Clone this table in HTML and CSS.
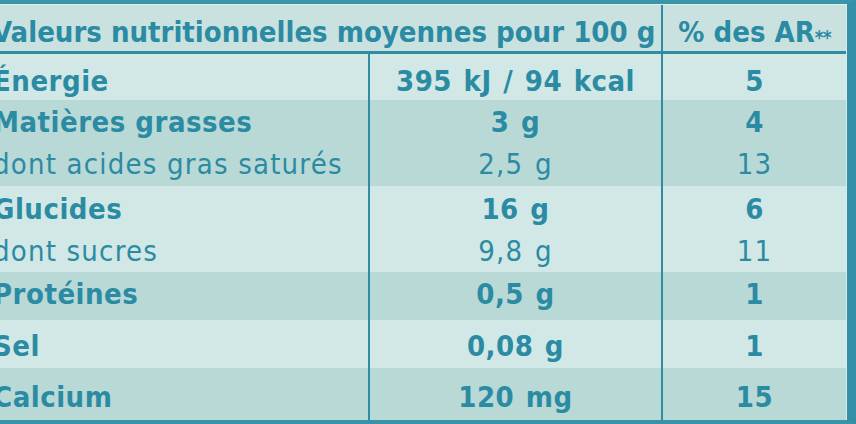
FILE: index.html
```html
<!DOCTYPE html>
<html lang="fr">
<head>
<meta charset="utf-8">
<title>Valeurs nutritionnelles</title>
<link rel="stylesheet" href="styles.css">
</head>
<body>
<div class="label">
  <div class="table">
    <div class="row head">
      <div class="c12">Valeurs nutritionnelles moyennes pour 100 g</div>
      <div class="c3">% des AR<span class="ast">**</span></div>
    </div>
    <div class="row light b">
      <div class="c1">Énergie</div><div class="c2">395 kJ / 94 kcal</div><div class="c3">5</div>
    </div>
    <div class="row dark b">
      <div class="c1">Matières grasses</div><div class="c2">3 g</div><div class="c3">4</div>
    </div>
    <div class="row dark">
      <div class="c1">dont acides gras saturés</div><div class="c2">2,5 g</div><div class="c3">13</div>
    </div>
    <div class="row light b">
      <div class="c1">Glucides</div><div class="c2">16 g</div><div class="c3">6</div>
    </div>
    <div class="row light">
      <div class="c1">dont sucres</div><div class="c2">9,8 g</div><div class="c3">11</div>
    </div>
    <div class="row dark b">
      <div class="c1">Protéines</div><div class="c2">0,5 g</div><div class="c3">1</div>
    </div>
    <div class="row light b">
      <div class="c1">Sel</div><div class="c2">0,08 g</div><div class="c3">1</div>
    </div>
    <div class="row dark b">
      <div class="c1">Calcium</div><div class="c2">120 mg</div><div class="c3">15</div>
    </div>
  </div>
</div>
</body>
</html>
```
FILE: styles.css
```css
html, body {
  margin: 0;
  padding: 0;
  width: 856px;
  height: 424px;
  overflow: hidden;
  background: #c9e2e0;
}

.label {
  width: 856px;
  height: 424px;
  box-sizing: border-box;
  border-top: 4px solid #3a95a9;
  border-bottom: 4px solid #3a94a8;
  border-right: 9px solid #3390a6;
  font-family: "Liberation Sans Narrow", "Arial Narrow", "DejaVu Sans Condensed", sans-serif;
  color: #2b8ba3;
  display: flex;
}

.table {
  flex: 1;
  display: flex;
  flex-direction: column;
  border-top: 1px solid #e0efee;
  border-right: 1px solid #d9ecea;
}

.row {
  display: grid;
  grid-template-columns: 368px 293px 1fr;
  align-items: end;
  font-size: 29px;
  line-height: 1;
  white-space: nowrap;
  letter-spacing: 1.2px;
}

.row.b { font-weight: 700; letter-spacing: 0.5px; }
.row.light { background: #d2e8e6; }
.row.dark { background: #b9d9d6; }

.c1 {
  text-indent: -7px;
  align-self: stretch;
  display: flex;
  align-items: flex-end;
}
.c2, .c3 {
  text-align: center;
  align-self: stretch;
  display: flex;
  align-items: flex-end;
  justify-content: center;
  border-left: 2px solid #2f8ca3;
}
.c2 { word-spacing: 2px; }

.head {
  grid-template-columns: 661px 1fr;
  height: 46px;
  font-size: 29px;
  font-weight: 700;
  letter-spacing: 0;
  background: #c9e2e0;
  border-bottom: 3px solid #2f8ca3;
}
.head .c12 {
  text-indent: -8px;
  align-self: stretch;
  display: flex;
  align-items: flex-end;
  padding-bottom: 4px;
}
.head .c3 { padding-bottom: 4px; }
.ast { font-size: 19px; vertical-align: 9px; letter-spacing: -1px; }

.row:nth-child(2) { height: 46px; }
.row:nth-child(3) { height: 42px; }
.row:nth-child(4) { height: 44px; }
.row:nth-child(5) { height: 42px; }
.row:nth-child(6) { height: 44px; }
.row:nth-child(7) { height: 48px; }
.row:nth-child(8) { height: 48px; }
.row:nth-child(9) { height: 52px; }

.row:nth-child(2) > div { padding-bottom: 4px; }
.row:nth-child(3) > div { padding-bottom: 5px; }
.row:nth-child(4) > div { padding-bottom: 7px; }
.row:nth-child(5) > div { padding-bottom: 4px; }
.row:nth-child(6) > div { padding-bottom: 6px; }
.row:nth-child(7) > div { padding-bottom: 11px; }
.row:nth-child(8) > div { padding-bottom: 7px; }
.row:nth-child(9) > div { padding-bottom: 8px; }
```
